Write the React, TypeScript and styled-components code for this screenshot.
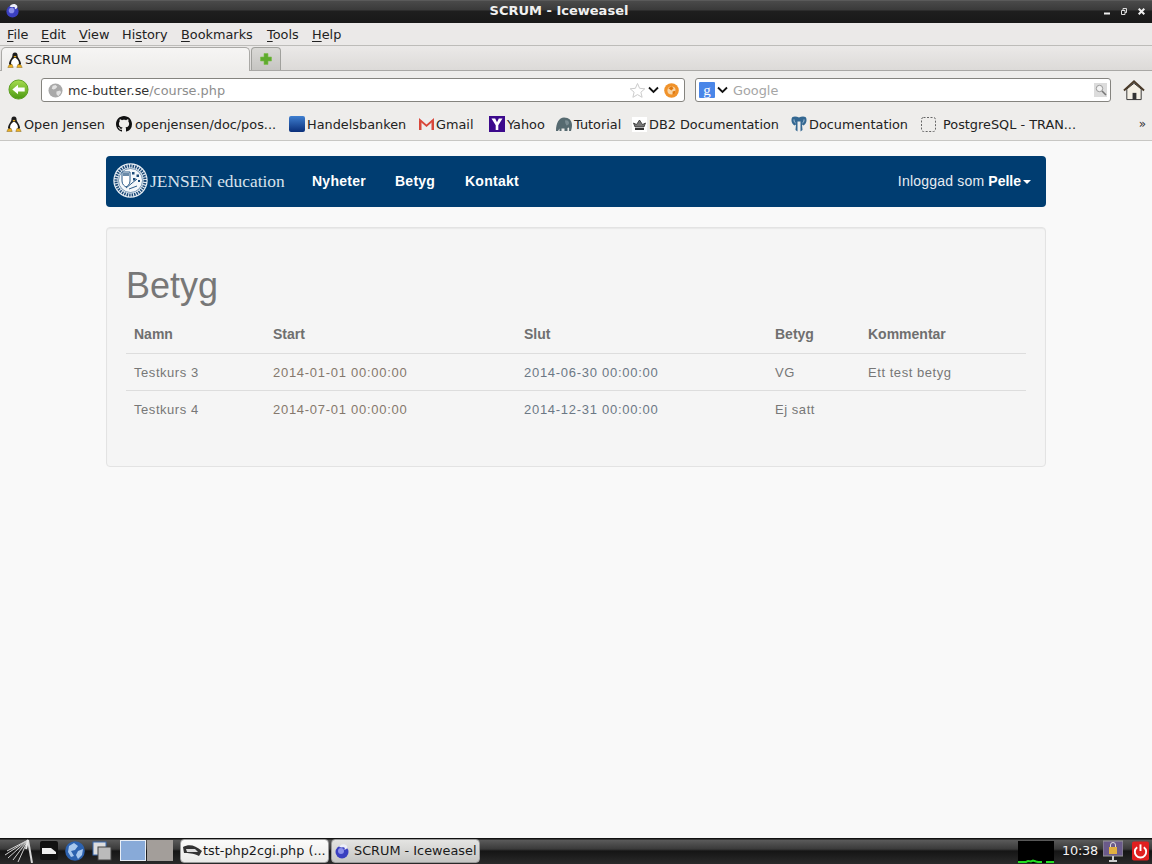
import styled, { createGlobalStyle } from "styled-components";

const GlobalStyle = createGlobalStyle`
  html, body { margin: 0; padding: 0; height: 100%; }
  body { background: #f9f9f9; overflow: hidden; }
  #root { height: 100%; }
`;

const Screen = styled.div`
  width: 1152px;
  height: 864px;
  display: flex;
  flex-direction: column;
  font-family: "DejaVu Sans", sans-serif;
  font-size: 12.85px;
  color: #1a1a1a;
`;

/* window title */
const TitleBar = styled.div`
  height: 23px;
  flex: none;
  box-sizing: border-box;
  display: flex;
  align-items: center;
  padding: 0 7px 2px 5px;
  background: linear-gradient(#6a6a6a 0, #4a4a4a 1px, #3a3a3a 10px, #1e1e1e 11px, #181818 100%);
`;
const WindowTitle = styled.div`
  flex: 1;
  text-align: center;
  color: #f0f0f0;
  font-weight: bold;
  font-size: 13px;
  padding-right: 6px;
`;
const WindowButtons = styled.div`
  display: flex;
  align-items: center;
  gap: 11px;
  margin-top: 2px;
`;

const MenuBar = styled.div`
  height: 23px;
  flex: none;
  box-sizing: border-box;
  display: flex;
  align-items: center;
  padding: 0 0 0 7px;
  background: #ebe9e8;
  border-bottom: 1px solid #bdbcb9;
`;
const MenuItem = styled.span<{ $w: number }>`
  width: ${(p) => p.$w}px;
  flex: none;
  color: #222;
  u { text-underline-offset: 2px; }
`;

const TabStrip = styled.div`
  height: 25px;
  flex: none;
  box-sizing: border-box;
  display: flex;
  align-items: flex-end;
  padding-left: 1px;
  gap: 1px;
  background: linear-gradient(#ebe9e8, #dcdad8);
  border-bottom: 1px solid #a9a8a5;
`;
const ActiveTab = styled.div`
  width: 249px;
  height: 24px;
  box-sizing: border-box;
  margin-bottom: -1px;
  display: flex;
  align-items: center;
  gap: 2px;
  padding-left: 5px;
  background: linear-gradient(#f6f5f4, #eeedeb);
  border: 1px solid #aaa9a6;
  border-bottom: none;
  border-radius: 5px 5px 0 0;
`;
const NewTab = styled.div`
  width: 30px;
  height: 23px;
  box-sizing: border-box;
  display: flex;
  align-items: center;
  justify-content: center;
  background: linear-gradient(#dad9d6, #c6c5c2);
  border: 1px solid #a0a09c;
  border-bottom: none;
  border-radius: 4px 4px 0 0;
`;

const NavBar = styled.div`
  height: 40px;
  flex: none;
  box-sizing: border-box;
  display: flex;
  align-items: center;
  padding: 0 7px 2px 8px;
  background: #eeedeb;
`;
const BackButton = styled.svg`
  flex: none;
  margin-right: 12px;
`;
const Field = styled.div<{ $w: number; $left?: number; $inset?: number }>`
  width: ${(p) => p.$w}px;
  height: 24px;
  flex: none;
  box-sizing: border-box;
  margin-left: ${(p) => p.$left ?? 0}px;
  display: flex;
  align-items: center;
  background: #fff;
  border: 1px solid #85847f;
  border-radius: 3px;
  padding: 0 ${(p) => p.$inset ?? 3}px;
`;
const UrlHost = styled.span`
  color: #333;
  margin-left: 5px;
`;
const UrlPath = styled.span`
  color: #8d8d8d;
`;
const Grow = styled.div`
  flex: 1;
`;
const StarIcon = styled.svg`
  flex: none;
  margin-right: 2px;
`;
const FeedIcon = styled.svg`
  flex: none;
  margin-left: 5px;
`;
const SearchArrow = styled.span`
  display: flex;
  margin-left: 2px;
`;
const SearchHint = styled.span`
  color: #a5a5a5;
  margin-left: 5px;
  flex: 1;
`;

const BookmarkBar = styled.div`
  height: 30px;
  flex: none;
  box-sizing: border-box;
  display: flex;
  align-items: center;
  padding: 0 0 3px 6px;
  background: #eeedeb;
  border-bottom: 1px solid #c8c7c4;
`;
const Bookmark = styled.div<{ $w: number }>`
  width: ${(p) => p.$w}px;
  flex: none;
  display: flex;
  align-items: center;
  white-space: nowrap;
  color: #222;
`;
const BmIcon = styled.span<{ $w?: number }>`
  width: ${(p) => p.$w ?? 18}px;
  flex: none;
  display: flex;
`;
const Chevrons = styled.span`
  margin-left: auto;
  padding-right: 6px;
  font-size: 12px;
  color: #333;
`;

/* the page itself */
const Page = styled.main`
  flex: 1;
  min-height: 0;
  box-sizing: border-box;
  background: #f9f9f9;
  padding: 15px 106px 0;
  font-family: "Liberation Sans", Arial, sans-serif;
  font-size: 14px;
  color: #777;
`;
const Navbar = styled.nav`
  height: 51px;
  box-sizing: border-box;
  display: flex;
  align-items: center;
  background: #003d71;
  border-radius: 4px;
  padding: 0 15px 2px 7px;
  color: #fff;
`;
const Brand = styled.div`
  width: 199px;
  flex: none;
  display: flex;
  align-items: center;
  gap: 2px;
  font-family: "Liberation Serif", serif;
  font-size: 17.4px;
  color: #d8e2ec;
  white-space: nowrap;
`;
const BrandName = styled.span`
  margin-top: 2px;
`;
const NavLink = styled.a<{ $w: number }>`
  width: ${(p) => p.$w}px;
  flex: none;
  font-weight: bold;
  letter-spacing: 0.25px;
  color: #fff;
`;
const UserMenu = styled.div`
  margin-left: auto;
  display: flex;
  align-items: center;
  letter-spacing: 0.2px;
  color: #e6ecf2;
  b { color: #fff; margin-left: 4px; letter-spacing: 0; }
`;
const Caret = styled.span`
  margin-left: 2px;
  margin-top: 2px;
  border-top: 4px solid #fff;
  border-left: 4px solid transparent;
  border-right: 4px solid transparent;
`;
const Well = styled.section`
  margin-top: 20px;
  height: 240px;
  box-sizing: border-box;
  background: #f5f5f5;
  border: 1px solid #e3e3e3;
  border-radius: 4px;
  padding: 19px;
  box-shadow: inset 0 1px 1px rgba(0, 0, 0, 0.05);
`;
const Heading = styled.h1`
  margin: 19px 0 10px;
  font-weight: 500;
  font-size: 36px;
  line-height: 40px;
  color: #777;
`;
const Table = styled.table`
  width: 900px;
  border-collapse: collapse;
  table-layout: fixed;
`;
const Th = styled.th<{ $w: number }>`
  width: ${(p) => p.$w}px;
  box-sizing: border-box;
  height: 37px;
  padding: 0 8px 1px;
  text-align: left;
  font-size: 14px;
  color: #6f6f6f;
  border-bottom: 1px solid #ddd;
`;
const Td = styled.td<{ $tint?: string }>`
  box-sizing: border-box;
  height: 37px;
  padding: 1px 8px 0;
  border-top: 1px solid #ddd;
  font-size: 13px;
  color: ${(p) => p.$tint ?? "#777"};
  letter-spacing: ${(p) => (p.$tint ? "0.72px" : "0.55px")};
`;

/* desktop panel */
const Taskbar = styled.footer`
  height: 26px;
  flex: none;
  box-sizing: border-box;
  display: flex;
  align-items: center;
  padding: 0 0 1px 2px;
  background: linear-gradient(#111 0, #111 1px, #5a5a5a 2px, #3a3a3a 11px, #151515 13px, #2a2a2a 100%);
`;
const TaskIcons = styled.div`
  display: flex;
  align-items: center;
  width: 118px;
  flex: none;
  gap: 7px;
`;
const PagerCell = styled.div<{ $active?: boolean }>`
  width: 26px;
  height: 21px;
  flex: none;
  box-sizing: border-box;
  background: ${(p) => (p.$active ? "#88aad8" : "#a39e9a")};
  border: ${(p) => (p.$active ? "1px solid #e8eef6" : "none")};
  margin-right: 1px;
`;
const TaskButton = styled.div<{ $active?: boolean }>`
  width: 149px;
  height: 24px;
  flex: none;
  box-sizing: border-box;
  margin-left: ${(p) => (p.$active ? "2px" : "6px")};
  display: flex;
  align-items: center;
  padding-left: 2px;
  border-radius: 4px;
  border: 1px solid #9a9a9a;
  background: ${(p) => (p.$active ? "linear-gradient(#e4e4e2, #c6c6c4)" : "linear-gradient(#fbfbfa, #eaeae8)")};
  color: #1a1a1a;
  white-space: nowrap;
`;
const TaskLabel = styled.span`
  margin-left: 4px;
`;
const Tray = styled.div`
  margin-left: auto;
  display: flex;
  align-items: center;
  padding-right: 3px;
`;
const Meter = styled.div`
  width: 36px;
  height: 22px;
  flex: none;
  display: flex;
  background: #000;
  margin-top: 2px;
`;
const Clock = styled.span`
  width: 36px;
  margin: 0 5px 0 8px;
  color: #f2f2f2;
  letter-spacing: -0.2px;
`;
const LockIcon = styled.svg`
  flex: none;
  margin-right: 9px;
`;

const Tux = ({ size = 16 }: { size?: number }) => (
  <svg width={size} height={size} viewBox="0 0 16 16">
    <path d="M8 .5C6 .5 5.300 2 5.400 4 5.400 5.500 2.500 8 2 11.300c-.1 1 .5 1.500 1.200 1.800h9.600c.7-.3 1.300-.8 1.200-1.800C13.500 8 10.600 5.500 10.600 4 10.700 2 10 .5 8 .5z" fill="#1c1c1c" />
    <path d="M8 6C6.200 6 4.100 8.700 4.100 11.200 4.100 13 6 14 8 14s3.900-1 3.900-2.800C11.900 8.700 9.800 6 8 6z" fill="#fff" />
    <path d="M6.500 4.500L8 3.700l1.500.8L8 5.700z" fill="#eeb020" />
    <path d="M.8 15.500h5.400L5 12.200l-3 .8zM15.200 15.500H9.800l1.200-3.300 3 .8z" fill="#eeb020" stroke="#6a5010" strokeWidth=".4" />
  </svg>
);

const Iceweasel = ({ size = 16 }: { size?: number }) => (
  <svg width={size} height={size} viewBox="0 0 16 16">
    <circle cx="8" cy="9" r="6.500" fill="#3a3fc0" />
    <circle cx="7" cy="8" r="3" fill="#8b90ea" />
    <path d="M5 4c1-3 6-4 8-1 1 2-1 4-3 3.500C12 5 10 3.500 8 4.500z" fill="#eceef8" />
  </svg>
);

const DownArrow = () => (
  <svg width="11" height="8" viewBox="0 0 11 8">
    <path d="M1 1.500l4.500 4.500 4.500-4.500" fill="none" stroke="#111" strokeWidth="1.800" />
  </svg>
);

export default function App() {
  return (
    <Screen>
      <GlobalStyle />
      <TitleBar>
        <Iceweasel size={15} />
        <WindowTitle>SCRUM - Iceweasel</WindowTitle>
        <WindowButtons>
          <svg width="6" height="7" viewBox="0 0 6 7"><rect y="4.500" width="6" height="2" fill="#eee" /></svg>
          <svg width="6" height="7" viewBox="0 0 6 7"><path d="M2 2V.5h3.500v4H4M.5 2.500h3.500v4H.500z" fill="none" stroke="#ddd" /></svg>
          <svg width="7" height="7" viewBox="0 0 7 7"><path d="M.7.700l5.600 5.600M6.300.700L.7 6.300" stroke="#eee" strokeWidth="2" /></svg>
        </WindowButtons>
      </TitleBar>

      <MenuBar>
        <MenuItem $w={34}><u>F</u>ile</MenuItem>
        <MenuItem $w={38}><u>E</u>dit</MenuItem>
        <MenuItem $w={43}><u>V</u>iew</MenuItem>
        <MenuItem $w={59}>Hi<u>s</u>tory</MenuItem>
        <MenuItem $w={86}><u>B</u>ookmarks</MenuItem>
        <MenuItem $w={45}><u>T</u>ools</MenuItem>
        <MenuItem $w={40}><u>H</u>elp</MenuItem>
      </MenuBar>

      <TabStrip>
        <ActiveTab>
          <Tux />
          SCRUM
        </ActiveTab>
        <NewTab>
          <svg width="14" height="14" viewBox="0 0 14 14">
            <path d="M5 1.500h4v3.500h3.500v4H9v3.500H5V9H1.500V5H5z" fill="#5faa2e" stroke="#7cc04a" strokeWidth=".6" />
          </svg>
        </NewTab>
      </TabStrip>

      <NavBar>
        <BackButton width="21" height="22" viewBox="0 0 22 23">
          <defs>
            <linearGradient id="back" x1="0" y1="0" x2="0" y2="1">
              <stop offset="0" stopColor="#a6dc4e" />
              <stop offset="1" stopColor="#4c9a12" />
            </linearGradient>
          </defs>
          <circle cx="11" cy="11" r="10" fill="url(#back)" stroke="#5a9e20" />
          <path d="M4.500 11l6-5v3h7v4h-7v3z" fill="#fff" />
        </BackButton>
        <Field $w={644} $inset={5}>
          <svg width="15" height="15" viewBox="0 0 16 16" style={{ marginLeft: 1 }}>
            <circle cx="8" cy="8" r="7.500" fill="#a9a9a9" />
            <path d="M5 3l3-1 2 2-2 2-2 1-2-1zM9 9l4-1 1 2-3 4-2-2z" fill="#e2e2e2" />
          </svg>
          <UrlHost>mc-butter.se</UrlHost>
          <UrlPath>/course.php</UrlPath>
          <Grow />
          <StarIcon width="17" height="17" viewBox="0 0 17 17">
            <path d="M8.500 1.500l2.100 4.800 5.200.5-3.900 3.400 1.200 5.100-4.600-2.700-4.600 2.700 1.200-5.100L1.200 6.800l5.200-.5z" fill="#fff" stroke="#ccc" />
          </StarIcon>
          <DownArrow />
          <FeedIcon width="15" height="15" viewBox="0 0 14 14">
            <circle cx="7" cy="7" r="6.800" fill="#f0922a" />
            <circle cx="7" cy="7" r="3.800" fill="#f8d6a8" />
            <path d="M4 5l3-2 2 2-2 2zM8 8l3-1-1 3-2 1z" fill="#e07a10" />
          </FeedIcon>
        </Field>
        <Field $w={416} $left={10} $inset={3}>
          <svg width="16" height="16" viewBox="0 0 16 16">
            <rect width="16" height="16" rx="1" fill="#4a86e8" />
            <text x="8" y="12.500" textAnchor="middle" fill="#fff" fontFamily="Liberation Serif" fontSize="15">g</text>
          </svg>
          <SearchArrow><DownArrow /></SearchArrow>
          <SearchHint>Google</SearchHint>
          <svg width="13" height="14" viewBox="0 0 13 14">
            <rect width="13" height="14" fill="#dcdcdc" />
            <circle cx="5.500" cy="5.500" r="3.200" fill="#f4f4f4" stroke="#999" />
            <path d="M8 8l4 4" stroke="#777" strokeWidth="1.600" />
          </svg>
        </Field>
        <Grow />
        <svg width="22" height="22" viewBox="0 0 23 22">
          <path d="M4 10v11h15V10L11.500 4z" fill="#f4efe4" stroke="#333" />
          <rect x="10" y="14" width="4" height="7" fill="#333" />
          <path d="M1 11.500L11.500 2 22 11.500" fill="none" stroke="#4a3a28" strokeWidth="2" />
        </svg>
      </NavBar>

      <BookmarkBar>
        <Bookmark $w={110}><BmIcon><Tux /></BmIcon>Open Jensen</Bookmark>
        <Bookmark $w={173}>
          <BmIcon $w={19}>
            <svg width="16" height="16" viewBox="0 0 16 16">
              <path fill="#111" d="M8 0C3.580 0 0 3.580 0 8c0 3.540 2.290 6.530 5.470 7.590.4.070.55-.17.55-.38 0-.19-.01-.82-.01-1.490-2.010.37-2.530-.49-2.690-.94-.09-.23-.48-.94-.82-1.130-.28-.15-.68-.52-.01-.53.630-.01 1.080.58 1.230.82.720 1.210 1.870.87 2.330.66.070-.52.280-.87.510-1.070-1.780-.2-3.640-.89-3.640-3.950 0-.87.310-1.590.82-2.150-.08-.2-.36-1.020.08-2.120 0 0 .67-.21 2.200.82.640-.18 1.320-.27 2-.27s1.360.09 2 .27c1.530-1.040 2.200-.82 2.200-.82.44 1.100.16 1.920.08 2.120.51.560.82 1.270.82 2.150 0 3.070-1.870 3.750-3.650 3.950.29.250.54.730.54 1.480 0 1.070-.01 1.930-.01 2.200 0 .21.150.46.550.38A8.010 8.010 0 0 0 16 8c0-4.420-3.580-8-8-8z" />
            </svg>
          </BmIcon>
          openjensen/doc/pos...
        </Bookmark>
        <Bookmark $w={130}>
          <BmIcon>
            <svg width="16" height="16" viewBox="0 0 16 16">
              <defs>
                <linearGradient id="hb" x1="0" y1="0" x2="0" y2="1">
                  <stop offset="0" stopColor="#3f7fd0" />
                  <stop offset="1" stopColor="#0a2f7a" />
                </linearGradient>
              </defs>
              <rect width="16" height="16" rx="2" fill="url(#hb)" />
            </svg>
          </BmIcon>
          Handelsbanken
        </Bookmark>
        <Bookmark $w={70}>
          <BmIcon $w={17}>
            <svg width="15" height="12" viewBox="0 0 15 12">
              <rect width="15" height="12" fill="#eee" />
              <path d="M0 2.500h2.500V12H0zM12.500 2.500H15V12h-2.500z" fill="#d9483b" />
              <path d="M0 0l7.500 6.500L15 0v2.500L7.500 9 0 2.500z" fill="#d9483b" />
            </svg>
          </BmIcon>
          Gmail
        </Bookmark>
        <Bookmark $w={67}>
          <BmIcon>
            <svg width="16" height="16" viewBox="0 0 16 16">
              <rect width="16" height="16" fill="#3c0a8c" />
              <path d="M2.500 2.500h3.700L8 6.200l1.800-3.700h3.700L9.300 9.300V14H6.700V9.300z" fill="#fff" />
            </svg>
          </BmIcon>
          Yahoo
        </Bookmark>
        <Bookmark $w={76}>
          <BmIcon>
            <svg width="16" height="16" viewBox="0 0 16 16">
              <path d="M0 15C0 7 3 1.500 8 1.500s8 3 8 7.500c0 2.500-.5 4-1 6h-2c.2-1.500.2-2.500 0-3.500l-1.500.5V15H8.500v-2.500H5.500V15H3.500v-2.500L2 15z" fill="#566a70" />
              <path d="M9 4.500c2-.8 4 .5 4 2.500 0 1.500-1.500 2.500-2.500 2.500C9.500 8 9 6.500 9 4.500z" fill="#7a8c92" />
            </svg>
          </BmIcon>
          Tutorial
        </Bookmark>
        <Bookmark $w={159}>
          <BmIcon $w={17}>
            <svg width="15" height="15" viewBox="0 0 15 15">
              <rect width="15" height="15" fill="#fff" />
              <path d="M3 10L1.500 6l3 1.500L7.500 3l3 4.500 3-1.500L12 10z" fill="#777" stroke="#222" strokeWidth=".7" />
              <rect x="3" y="11" width="9" height="2" fill="#333" />
            </svg>
          </BmIcon>
          DB2 Documentation
        </Bookmark>
        <Bookmark $w={130}>
          <BmIcon>
            <svg width="16" height="16" viewBox="0 0 16 16">
              <path d="M1.500 1C-.5 3 .5 8 3.500 9.500L5 8.500l-.5 5.500 2 1.500V5.500h3V15.500l2-1.500-.5-5.500 1.500 1c3-1.500 4-6.500 2-8.500-2-1-4.500-.5-6.500.5C6 .5 3.500 0 1.500 1z" fill="#336791" />
              <path d="M3 3.500c0 1.500.5 3 1.500 3.500M13 3.500c0 1.500-.5 3-1.500 3.500" fill="none" stroke="#cfe0ee" strokeWidth=".8" />
            </svg>
          </BmIcon>
          Documentation
        </Bookmark>
        <Bookmark $w={170}>
          <BmIcon $w={22}>
            <svg width="15" height="15" viewBox="0 0 15 15">
              <rect x=".5" y=".5" width="14" height="14" rx="2" fill="none" stroke="#666" strokeDasharray="2 1.500" />
            </svg>
          </BmIcon>
          PostgreSQL - TRAN...
        </Bookmark>
        <Chevrons>»</Chevrons>
      </BookmarkBar>

      <Page>
        <Navbar>
          <Brand>
            <svg width="35" height="35" viewBox="0 0 35 35">
              <circle cx="17.500" cy="17.500" r="17.200" fill="#e8eef4" />
              <circle cx="17.500" cy="17.500" r="14.500" fill="none" stroke="#1c4a78" strokeWidth="3" strokeDasharray="1.500 1" />
              <circle cx="17.500" cy="17.500" r="12" fill="#f4f7fa" stroke="#2a5a88" strokeWidth=".6" />
              <path d="M9 9h8v9c0 3.500-2.500 5-4 6-1.500-1-4-2.500-4-6z" fill="#fff" stroke="#2a5a88" />
              <rect x="10" y="10" width="6" height="3" fill="#6a8aa8" />
              <path d="M19 9h2.500v2.500H19zM23.500 11.500H26V14h-2.500zM20 15h2.500v2.500H20zM25 17h2v2h-2z" fill="#1c4a78" />
              <path d="M13 25l11-9M16 26l8-3" stroke="#2a5a88" />
            </svg>
            <BrandName>JENSEN education</BrandName>
          </Brand>
          <NavLink $w={83}>Nyheter</NavLink>
          <NavLink $w={70}>Betyg</NavLink>
          <NavLink $w={60}>Kontakt</NavLink>
          <UserMenu>
            Inloggad som <b>Pelle</b>
            <Caret />
          </UserMenu>
        </Navbar>
        <Well>
          <Heading>Betyg</Heading>
          <Table>
            <thead>
              <tr>
                <Th $w={139}>Namn</Th>
                <Th $w={251}>Start</Th>
                <Th $w={251}>Slut</Th>
                <Th $w={93}>Betyg</Th>
                <Th $w={166}>Kommentar</Th>
              </tr>
            </thead>
            <tbody>
              <tr>
                <Td>Testkurs 3</Td>
                <Td $tint="#85786c">2014-01-01 00:00:00</Td>
                <Td $tint="#6c7885">2014-06-30 00:00:00</Td>
                <Td>VG</Td>
                <Td>Ett test betyg</Td>
              </tr>
              <tr>
                <Td>Testkurs 4</Td>
                <Td $tint="#85786c">2014-07-01 00:00:00</Td>
                <Td $tint="#6c7885">2014-12-31 00:00:00</Td>
                <Td>Ej satt</Td>
                <Td />
              </tr>
            </tbody>
          </Table>
        </Well>
      </Page>

      <Taskbar>
        <TaskIcons>
          <svg width="31" height="24" viewBox="0 0 31 24">
            <path d="M26 1L5 12M26 1L3 16M26 1L6 19M26 1L11 21M26 1L16 23" fill="none" stroke="#d0d0d0" strokeWidth="1" />
            <path d="M26 1L30 24" fill="none" stroke="#d8d8d8" strokeWidth="2" />
            <path d="M26 1L24 10" fill="none" stroke="#e8e8e8" strokeWidth="2" />
          </svg>
          <svg width="18" height="19" viewBox="0 0 18 19">
            <rect width="18" height="19" rx="2" fill="#111" />
            <path d="M2 7h9l5 4v2H2z" fill="#eee" />
          </svg>
          <svg width="20" height="20" viewBox="0 0 20 20">
            <circle cx="10" cy="10" r="9.800" fill="#2c62b0" />
            <path d="M4 5l5-3 4 3-3 4-4 1 3 5-3 1-3-5zM13 10l5-2-1 6-4 4-2-4z" fill="#a8c8ee" />
          </svg>
          <svg width="20" height="20" viewBox="0 0 20 20">
            <rect x="1" y="1" width="13" height="13" fill="#ddd" stroke="#3a6ab0" />
            <rect x="6" y="6" width="13" height="13" fill="#bbb" stroke="#444" />
          </svg>
        </TaskIcons>
        <PagerCell $active />
        <PagerCell />
        <TaskButton>
          <svg width="20" height="14" viewBox="0 0 20 14">
            <path d="M0 3c6-3 12-2 19 4l-3 5C10 9 5 9 1 9z" fill="#333" />
            <path d="M3 5h9l3 3H4z" fill="#ddd" />
          </svg>
          tst-php2cgi.php (...
        </TaskButton>
        <TaskButton $active>
          <Iceweasel />
          <TaskLabel>SCRUM - Iceweasel</TaskLabel>
        </TaskButton>
        <Tray>
          <Meter>
            <svg width="36" height="22" viewBox="0 0 36 22">
              <path d="M0 21h8l2-1 3 .5 2-1 3 1 2 .5h4M28 21h8" fill="none" stroke="#22dd22" strokeWidth="2" />
            </svg>
          </Meter>
          <Clock>10:38</Clock>
          <LockIcon width="20" height="22" viewBox="0 0 20 22">
            <rect y="1" width="20" height="15" fill="#6a5a8a" stroke="#999" />
            <rect x="6" y="7" width="8" height="7" fill="#e0b040" />
            <path d="M7.500 7V5a2.500 2.500 0 0 1 5 0v2" fill="none" stroke="#ddd" />
            <path d="M6 20h8v2H6zM9 16h2v4H9z" fill="#ccc" />
          </LockIcon>
          <svg width="17" height="20" viewBox="0 0 18 20">
            <rect width="18" height="20" rx="2" fill="#e02020" />
            <path d="M5.500 6a6 6 0 1 0 7 0" fill="none" stroke="#fff" strokeWidth="2" />
            <path d="M9 3v7" stroke="#fff" strokeWidth="2" />
          </svg>
        </Tray>
      </Taskbar>
    </Screen>
  );
}
